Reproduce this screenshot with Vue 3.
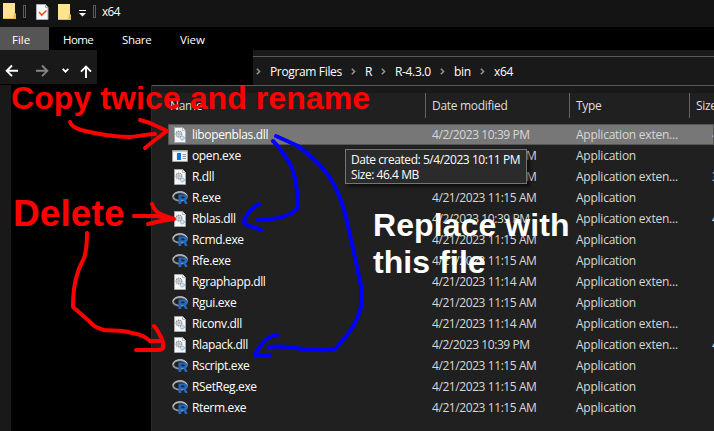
<script setup>
const tabs = ['Home', 'Share', 'View']
const crumbs = [
  { label: 'Program Files', w: 95 },
  { label: 'R', w: 30 },
  { label: 'R-4.3.0', w: 59 },
  { label: 'bin', w: 40 },
  { label: 'x64', w: 40 },
]
const am15 = '4/21/2023 11:15 AM'
const am14 = '4/21/2023 11:14 AM'
const pm = '4/2/2023 10:39 PM'
const files = [
  { name: 'libopenblas.dll', date: pm, icon: 'dll', size: '47,500 KB', selected: true },
  { name: 'open.exe', date: am15, icon: 'exe' },
  { name: 'R.dll', date: am15, icon: 'dll', size: '3,500 KB' },
  { name: 'R.exe', date: am15, icon: 'r' },
  { name: 'Rblas.dll', date: pm, icon: 'dll', size: '47,500 KB' },
  { name: 'Rcmd.exe', date: am15, icon: 'r' },
  { name: 'Rfe.exe', date: am15, icon: 'r' },
  { name: 'Rgraphapp.dll', date: am14, icon: 'dll' },
  { name: 'Rgui.exe', date: am15, icon: 'r' },
  { name: 'Riconv.dll', date: am14, icon: 'dll' },
  { name: 'Rlapack.dll', date: pm, icon: 'dll', size: '47,500 KB' },
  { name: 'Rscript.exe', date: am15, icon: 'r' },
  { name: 'RSetReg.exe', date: am15, icon: 'r' },
  { name: 'Rterm.exe', date: am15, icon: 'r' },
]
</script>

<template>
  <div class="window">
    <header class="titlebar">
      <svg class="folder" viewBox="0 0 14 17"><path d="M0 0h12v10l1 1v5H0z" fill="#ffe394" /><path d="M11 10l2 1v5h-3z" fill="#e9bd4c" /><path d="M0 15.500h13" stroke="#e9bd4c" /></svg>
      <i class="divider first"></i>
      <svg class="check" viewBox="0 0 13 17"><path d="M.5 1.500h9l2.500 3v12H.5z" fill="#f5f8fb" stroke="#aab0b8" /><path d="M9.500 1.500v3H12" fill="none" stroke="#aab0b8" /><path d="M3 9l2.700 3 4.800-4.500" fill="none" stroke="#e95420" stroke-width="1.600" /></svg>
      <svg class="folder second" viewBox="0 0 14 17"><path d="M0 0h12v10l1 1v5H0z" fill="#ffe394" /><path d="M11 10l2 1v5h-3z" fill="#e9bd4c" /><path d="M0 15.500h13" stroke="#e9bd4c" /></svg>
      <svg class="customize" viewBox="0 0 7 7"><path d="M0 .5h7" stroke="#fff" /><path d="M0 3h7L3.500 6.500z" fill="#fff" /></svg>
      <i class="divider last"></i>
      <span class="title">x64</span>
    </header>
    <nav class="tabs">
      <span class="tab file">File</span>
      <span v-for="t in tabs" :key="t" class="tab" :class="t.toLowerCase()">{{ t }}</span>
    </nav>
    <div class="navrow">
      <div class="buttons">
        <svg viewBox="0 0 97 34" fill="none" stroke="#fff" stroke-width="1.900">
          <path d="M18 20.800H7M12 15.500L6.700 20.800 12 26.100" />
          <path d="M36 20.800h11M42 15.500l5.300 5.300L42 26.100" stroke="#858585" />
          <path d="M62.700 18.800l2.800 2.800 2.800-2.800" />
          <path d="M86 28V16.500M81 21.700l5-5 5 5" />
        </svg>
      </div>
      <div class="address">
        <div class="crumbs">
          <span v-for="c in crumbs" :key="c.label" class="crumb" :style="{ width: c.w + 'px' }">
            <svg class="chev" viewBox="0 0 5 7"><path d="M.8.7l2.800 2.800L.8 6.300" fill="none" stroke="#969696" stroke-width="1.500" /></svg>{{ c.label }}
          </span>
        </div>
      </div>
    </div>
    <div class="body">
      <div class="edge"></div>
      <aside></aside>
      <main>
        <div class="gap"></div>
        <div class="head">
          <span class="h name">Name</span>
          <span class="h date">Date modified</span>
          <span class="h type">Type</span>
          <span class="h size">Size</span>
        </div>
        <div class="rows">
          <div v-for="f in files" :key="f.name" class="row" :class="{ selected: f.selected }">
            <span class="icon">
              <svg v-if="f.icon === 'dll'" viewBox="0 0 16 16">
                <path d="M2.500.500h8l3 3v12h-11z" fill="#f4f6f7" stroke="#a4a7aa" />
                <path d="M10.500.500v3h3" fill="#fff" stroke="#a4a7aa" stroke-width=".8" />
                <circle cx="7" cy="7" r="2.900" fill="#dfe3e6" stroke="#858c92" stroke-width="1.100" stroke-dasharray="1.400 .6" />
                <circle cx="7" cy="7" r="1.100" fill="#fff" stroke="#858c92" stroke-width=".7" />
                <circle cx="10.300" cy="11" r="2" fill="#cfe3f1" stroke="#77a7c8" stroke-dasharray="1.200 .5" />
              </svg>
              <svg v-else-if="f.icon === 'exe'" viewBox="0 0 16 16">
                <path d="M.5 2.500h15v11H.5z" fill="#f5f5f5" stroke="#a0a3a6" />
                <path d="M1 3.500h14" stroke="#c4c8cb" />
                <path d="M5 5h4v7H5z" fill="#0877d8" />
                <path d="M10.500 6.500H14M10.500 8.500H14M10.500 10.500H14" stroke="#929699" />
                <path d="M2 6h2v5H2z" fill="#fff" />
              </svg>
              <svg v-else viewBox="0 0 16 16">
                <ellipse cx="8" cy="6.500" rx="6.900" ry="4.300" fill="none" stroke="#8e9296" stroke-width="1.900" />
                <path d="M1 6.300C1.500 3 5 1.800 8 1.800s6 1 7 3.500" fill="none" stroke="#c3c6ca" stroke-width="1" />
                <path d="M6.500 4.600h5.200c2.500 0 3.500 1 3.500 2.500 0 1.300-.7 2-1.500 2.400l2 4.500h-2.700l-1.800-4H9.300v4H6.500z" fill="#2268c0" />
                <path d="M9.300 6.600h2c1 0 1.200.2 1.200.8s-.3.800-1.200.8h-2z" fill="#202020" />
              </svg>
            </span>
            <span class="fname">{{ f.name }}</span>
            <span class="fdate">{{ f.date }}</span>
            <span class="ftype">{{ f.icon === 'dll' ? 'Application exten...' : 'Application' }}</span>
            <span class="fsize">{{ f.size }}</span>
          </div>
        </div>
      </main>
    </div>

    <div class="tooltip"><div>Date created: 5/4/2023 10:11 PM</div><div>Size: 46.4 MB</div></div>
    <svg class="ink" viewBox="0 0 714 431" fill="none" stroke-width="4" stroke-linecap="round" stroke-linejoin="round">
      <g stroke="#f00">
        <path d="M70 122c1 4 5 6 11 8 16 4 32 7 48 7 9 0 15-3 26-3M140 120l10 3 17 8-12 9-10 8" />
        <path d="M134 216h23l17 3M152 204c2 7 6 9 13 12l9 3-13 2-13 3" />
        <path d="M87 233c0 11-1 19-3 25-7 13-11 26-11 49l16 14c5 6 9 7 15 9 10 1 18 0 28 3 7 1 13 3 18 8h12M154 326c4 4 6 9 9 16v6c-1 2-4 2-8 2h-19" />
      </g>
      <g stroke="#00f">
        <path d="M273 141c8 8 11 14 16 21 5 8 9 26 9 45-4 7-16 11-27 12l-13 1M259 204c-7 4-14 11-15 18 0 3 10 5 17 8" />
        <path d="M276 136l22 10c14 10 32 27 39 45 10 20 11 39 16 57l8 38v21c-4 15-11 26-25 41-3 3-17 2-29 2-18-4-30-4-38-3M277 335c-11 1-16 10-22 19v1h15" />
      </g>
    </svg>
    <div class="note copy">Copy twice and rename</div>
    <div class="note delete">Delete</div>
    <div class="note replace">Replace with<br />this file</div>
  </div>
</template>

<style>
body { margin: 0; background: #000; overflow: hidden; }
</style>
<style scoped>
* { box-sizing: border-box; }
.window { position: relative; width: 714px; height: 431px; overflow: hidden; background: #000; color: #fff; font: 12px "Open Sans", "Noto Sans", sans-serif; letter-spacing: -0.35px; white-space: nowrap; display: flex; flex-direction: column; }
svg { display: block; flex: none; }
.titlebar { height: 27px; background: #141414; display: flex; align-items: flex-start; padding: 3px 0 0 3px; flex: none; }
.folder { width: 14px; height: 17px; }
.second { margin-left: 9px; margin-top: 1px; }
.check { width: 13px; height: 17px; margin-left: 10px; }
.divider { width: 3px; height: 13px; margin-top: 2px; border: 1px solid #5c5c5c; flex: none; }
.first { margin-left: 6px; }
.customize { width: 7px; height: 7px; margin: 7px 0 0 7px; }
.last { margin-left: 7px; }
.title { margin-left: 6px; line-height: 17px; font-size: 11.800px; letter-spacing: -0.6px; }
.tabs { height: 23px; display: flex; flex: none; line-height: 25px; font-size: 11.500px; letter-spacing: -0.3px; }
.file { width: 49px; background: #555; padding-left: 12px; letter-spacing: 0; }
.home { margin-left: 14px; width: 59px; letter-spacing: -0.6px; }
.share { width: 58px; }
.view { letter-spacing: -0.1px; }
.navrow { height: 36px; display: flex; justify-content: space-between; flex: none; }
.buttons { width: 97px; height: 34px; background: #191919; }
.buttons svg { width: 97px; height: 34px; }
.address { width: 461px; background: #191919; padding-top: 6px; }
.crumbs { height: 30px; border-top: 1px solid #5a5a5a; border-bottom: 1px solid #5a5a5a; display: flex; align-items: center; padding-left: 3px; }
.crumb { display: flex; align-items: center; flex: none; }
.chev { width: 5px; height: 7px; margin-right: 9px; }
.body { flex: 1; display: flex; min-height: 0; margin-top: -1px; }
.edge { width: 11px; background: #191919; flex: none; }
aside { width: 140px; background: #000; flex: none; }
main { flex: 1; background: #202020; border-left: 1px solid #2b2b2b; min-width: 0; }
.gap { height: 8px; background: #191919; border-top: 1px solid #5a5a5a; }
.head { display: flex; height: 25px; line-height: 26px; color: #dedede; }
.h { flex: none; padding-left: 6px; border-left: 1px solid #636363; letter-spacing: -0.3px; }
.name { width: 273px; padding-left: 18px; border-left: 0; margin: 0; }
.date { width: 144px; }
.type { width: 120px; }
.size { width: 40px; }
.rows { padding: 6px 0 0 16px; }
.row { height: 21px; display: flex; align-items: center; padding-left: 4px; color: #d8d8d8; line-height: 20px; }
.selected { background: #777; outline: 1px solid #555; outline-offset: -1px; }
.icon { width: 20px; flex: none; }
.icon svg { width: 16px; height: 16px; }
.fname { width: 240px; color: #fff; flex: none; }
.fdate { width: 144px; flex: none; letter-spacing: -0.42px; }
.ftype { width: 136px; flex: none; letter-spacing: -0.24px; }
.tooltip { position: absolute; left: 345px; top: 149px; width: 182px; height: 35px; background: #2b2b2b; border: 1px solid #767676; padding: 2px 5px; line-height: 15px; letter-spacing: -0.45px; box-shadow: 3px 3px 3px #0008; }
.ink { position: absolute; left: 0; top: 0; width: 714px; height: 431px; }
.note { position: absolute; font: bold 32px/37px "Liberation Sans", sans-serif; letter-spacing: 0.080px; color: #f00; }
.copy { left: 11px; top: 80px; }
.delete { left: 13px; top: 194px; font-size: 37px; line-height: 40px; }
.replace { left: 373px; top: 207px; color: #fff; }
</style>
